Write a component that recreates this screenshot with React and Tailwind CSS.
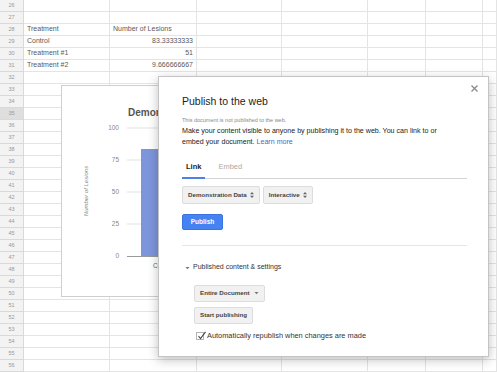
const colWidths = "grid-cols-[24px_86px_87px_85px_86px_58px_57px_1fr]";
const rows = Array.from({ length: 31 }, (_, i) => 26 + i);

const data = {
  28: [{ t: "Treatment" }, { t: "Number of Lesions" }],
  29: [{ t: "Control" }, { t: "83.33333333", r: true }],
  30: [{ t: "Treatment #1" }, { t: "51", r: true }],
  31: [{ t: "Treatment #2" }, { t: "9.666666667", r: true }],
};

function Sheet() {
  return (
    <div className={`grid ${colWidths}`}>
      {rows.map((n) => (
        <div key={n} className="contents">
          <div
            className={`h-[12px] border-b border-r border-[#d9d9d9] flex items-center justify-center text-[5.5px] text-[#999] ${
              n === 35 ? "bg-[#dedede]" : "bg-[#f3f3f3]"
            }`}
          >
            {n}
          </div>
          {Array.from({ length: 7 }, (_, c) => {
            const cell = data[n] && data[n][c];
            return (
              <div
                key={c}
                className={`h-[12px] border-b border-r border-[#e4e4e4] flex items-center px-[3px] text-[7px] text-[#5a5a5a] overflow-hidden whitespace-nowrap ${
                  cell && cell.r ? "justify-end" : ""
                }`}
              >
                {cell ? cell.t : ""}
              </div>
            );
          })}
        </div>
      ))}
    </div>
  );
}

function Chart() {
  const ticks = [
    { v: "100", y: 42 },
    { v: "75", y: 74 },
    { v: "50", y: 106 },
    { v: "25", y: 138 },
  ];
  return (
    <div className="absolute left-[61px] top-[85px] w-[300px] h-[212px] bg-white border border-[#cfcfcf] overflow-hidden">
      <svg width="300" height="212" className="block">
        <text x="66" y="30" fontSize="10" fontWeight="bold" fill="#555" fontFamily="Liberation Sans, Arial, sans-serif">
          Demonstration Data
        </text>
        {ticks.map((t) => (
          <g key={t.v}>
            <line x1="65" x2="300" y1={t.y} y2={t.y} stroke="#e3e3e3" strokeWidth="1" />
            <text x="57" y={t.y + 2.3} fontSize="6.5" textAnchor="end" fill="#888" fontFamily="Liberation Sans, Arial, sans-serif">
              {t.v}
            </text>
          </g>
        ))}
        <rect x="79" y="63" width="80" height="107" fill="#7d95db" />
        <line x1="65" x2="300" y1="170.5" y2="170.5" stroke="#999" strokeWidth="1" />
        <text x="57" y="172.3" fontSize="6.5" textAnchor="end" fill="#888" fontFamily="Liberation Sans, Arial, sans-serif">
          0
        </text>
        <text x="91" y="182" fontSize="6.5" fill="#666" fontFamily="Liberation Sans, Arial, sans-serif">
          Control
        </text>
        <text
          x="26"
          y="105"
          fontSize="6"
          fontStyle="italic"
          textAnchor="middle"
          fill="#888"
          transform="rotate(-90 26 105)"
          fontFamily="Liberation Sans, Arial, sans-serif"
        >
          Number of Lesions
        </text>
      </svg>
    </div>
  );
}

function Spinner() {
  return (
    <svg width="4" height="6" viewBox="0 0 4 6" className="ml-[3px]">
      <path d="M2 0 L4 2.2 L0 2.2 Z M2 6 L4 3.8 L0 3.8 Z" fill="#666" />
    </svg>
  );
}

function GrayButton({ children, className = "" }) {
  return (
    <div
      className={`flex items-center whitespace-nowrap bg-[#f1f1f1] border border-[#dcdcdc] rounded-[2px] px-[5px] text-[6.2px] font-bold text-[#444] ${className}`}
    >
      {children}
    </div>
  );
}

function Dialog() {
  return (
    <div className="absolute left-[158px] top-[76px] w-[331px] h-[281px] bg-white border border-[#c4c4c4] shadow-[0_3px_10px_rgba(0,0,0,0.25)]">
      <div className="absolute right-[10px] top-[8px] text-[#888]">
        <svg width="7" height="7" viewBox="0 0 7 7">
          <path d="M0.5 0.5 L6.5 6.5 M6.5 0.5 L0.5 6.5" stroke="#8a8a8a" strokeWidth="1.3" />
        </svg>
      </div>
      <div className="pl-[23px] pr-[23px] pt-[19px] flex flex-col">
        <div className="text-[10.5px] leading-[10px] text-[#222]">Publish to the web</div>
        <div className="mt-[11px] text-[5.5px] leading-[6px] text-[#888]">
          This document is not published to the web.
        </div>
        <div className="mt-[2.5px] text-[7.1px] leading-[11px] text-[#222] w-[268px]">
          Make your content visible to anyone by publishing it to the web. You can link to or embed your
          document. <span className="text-[#3b6dcc]">Learn more</span>
        </div>
        <div className="mt-[14px] w-[285px] flex items-end border-b border-[#d4d4d4]">
          <div className="px-[4px] pb-[5px] border-b-2 border-[#4d80e8] -mb-px text-[7.5px] leading-[10px] font-bold text-[#222]">
            Link
          </div>
          <div className="ml-[9px] px-[4px] pb-[6px] text-[7.5px] leading-[10px] text-[#aaa]">Embed</div>
        </div>
        <div className="mt-[7px] flex gap-[3px]">
          <GrayButton className="h-[18px] px-[4px]">
            Demonstration Data
            <Spinner />
          </GrayButton>
          <GrayButton className="h-[18px] px-[4px]">
            Interactive
            <Spinner />
          </GrayButton>
        </div>
        <div className="mt-[10px] w-[41px] h-[16px] rounded-[2px] bg-[#4583f3] border border-[#3b74e0] flex items-center justify-center text-[6.5px] font-bold text-white">
          Publish
        </div>
        <div className="mt-[15px] w-[285px] border-t border-[#e5e5e5]" />
        <div className="mt-[17px] flex items-center h-[10px] text-[7px] text-[#333]">
          <svg width="5" height="4" viewBox="0 0 5 4" className="ml-[3px] mr-[3px]">
            <path d="M0.5 1 L4.5 1 L2.5 3.3 Z" fill="#777" />
          </svg>
          Published content &amp; settings
        </div>
        <div className="ml-[12px] mt-[12px] flex flex-col items-start">
          <GrayButton className="h-[17px]">
            Entire Document
            <svg width="5" height="4" viewBox="0 0 5 4" className="ml-[4px]">
              <path d="M0.5 1 L4.5 1 L2.5 3.3 Z" fill="#777" />
            </svg>
          </GrayButton>
          <GrayButton className="mt-[5px] h-[17px]">Start publishing</GrayButton>
          <div className="mt-[8px] ml-[2px] flex items-center h-[9px] text-[7.4px] text-[#333]">
            <div className="w-[8px] h-[8px] border border-[#b5b5b5] bg-white relative mr-[3px]">
              <svg width="10" height="9" viewBox="0 0 10 9" className="absolute left-[0px] top-[-2px]">
                <path d="M1.5 5 L3.5 7.5 L8.5 0.8" stroke="#444" strokeWidth="1.1" fill="none" />
              </svg>
            </div>
            Automatically republish when changes are made
          </div>
        </div>
      </div>
    </div>
  );
}

export default function App() {
  return (
    <div className="relative w-[497px] h-[372px] overflow-hidden bg-white font-['Liberation_Sans',Arial,sans-serif]">
      <Sheet />
      <Chart />
      <Dialog />
    </div>
  );
}
